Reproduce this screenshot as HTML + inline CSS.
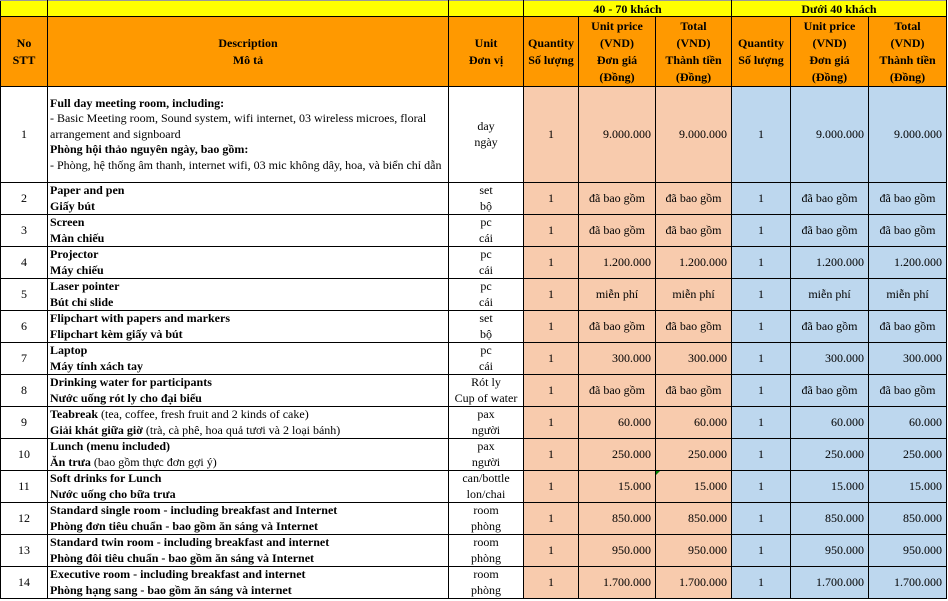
<!DOCTYPE html>
<html><head><meta charset="utf-8"><style>
body{margin:0;background:#fff;}
table{border-collapse:collapse;table-layout:fixed;font-family:"Liberation Serif","Noto Serif CJK SC",serif;font-size:12px;color:#000;position:absolute;left:0;top:0;}
td{border:1px solid #000;padding:0 2px;line-height:15.5px;overflow:hidden;white-space:nowrap;vertical-align:middle;}
tr.t td{border-top:1px solid #999;line-height:14px}
.y{background:#ffff00;font-weight:bold;text-align:center;}
.h td{background:#ff9900;font-weight:bold;text-align:center;line-height:17px}
.c{text-align:center}
.r{text-align:right;padding-right:4px}
.p{background:#f8cbad}
.b{background:#bdd7ee}
b{font-weight:bold}
tr.n{height:31px}
</style></head><body>
<table>
<colgroup><col style="width:47px"><col style="width:401px"><col style="width:75px"><col style="width:55px"><col style="width:77px"><col style="width:76px"><col style="width:59px"><col style="width:78px"><col style="width:78px"></colgroup>
<tr class="t" style="height:16px"><td class="y"></td><td class="y"></td><td class="y"></td><td class="y" colspan="3">40 - 70 khách</td><td class="y" colspan="3">Dưới 40 khách</td></tr>
<tr class="h" style="height:70px"><td>No<br>STT</td><td>Description<br>Mô tả</td><td>Unit<br>Đơn vị</td><td>Quantity<br>Số lượng</td><td>Unit price<br>(VND)<br>Đơn giá<br>(Đồng)</td><td>Total<br>(VND)<br>Thành tiền<br>(Đồng)</td><td>Quantity<br>Số lượng</td><td>Unit price<br>(VND)<br>Đơn giá<br>(Đồng)</td><td>Total<br>(VND)<br>Thành tiền<br>(Đồng)</td></tr>
<tr style="height:96px"><td class="c">1</td><td><b>Full day meeting room, including:</b><br>- Basic Meeting room, Sound system, wifi internet, 03 wireless microes, floral<br>arrangement and signboard<br><b>Phòng hội thảo nguyên ngày, bao gồm:</b><br>- Phòng, hệ thống âm thanh, internet wifi, 03 mic không dây, hoa, và biển chỉ dẫn</td><td class="c">day<br>ngày</td><td class="c p">1</td><td class="r p">9.000.000</td><td class="r p">9.000.000</td><td class="c b">1</td><td class="r b">9.000.000</td><td class="r b">9.000.000</td></tr>
<tr class="n"><td class="c">2</td><td><b>Paper and pen<br>Giấy bút</b></td><td class="c">set<br>bộ</td><td class="c p">1</td><td class="c p">đã bao gồm</td><td class="c p">đã bao gồm</td><td class="c b">1</td><td class="c b">đã bao gồm</td><td class="c b">đã bao gồm</td></tr>
<tr class="n"><td class="c">3</td><td><b>Screen<br>Màn chiếu</b></td><td class="c">pc<br>cái</td><td class="c p">1</td><td class="c p">đã bao gồm</td><td class="c p">đã bao gồm</td><td class="c b">1</td><td class="c b">đã bao gồm</td><td class="c b">đã bao gồm</td></tr>
<tr class="n"><td class="c">4</td><td><b>Projector<br>Máy chiếu</b></td><td class="c">pc<br>cái</td><td class="c p">1</td><td class="r p">1.200.000</td><td class="r p">1.200.000</td><td class="c b">1</td><td class="r b">1.200.000</td><td class="r b">1.200.000</td></tr>
<tr class="n"><td class="c">5</td><td><b>Laser pointer<br>Bút chỉ slide</b></td><td class="c">pc<br>cái</td><td class="c p">1</td><td class="c p">miễn phí</td><td class="c p">miễn phí</td><td class="c b">1</td><td class="c b">miễn phí</td><td class="c b">miễn phí</td></tr>
<tr class="n"><td class="c">6</td><td><b>Flipchart with papers and markers<br>Flipchart kèm giấy và bút</b></td><td class="c">set<br>bộ</td><td class="c p">1</td><td class="c p">đã bao gồm</td><td class="c p">đã bao gồm</td><td class="c b">1</td><td class="c b">đã bao gồm</td><td class="c b">đã bao gồm</td></tr>
<tr class="n"><td class="c">7</td><td><b>Laptop<br>Máy tính xách tay</b></td><td class="c">pc<br>cái</td><td class="c p">1</td><td class="r p">300.000</td><td class="r p">300.000</td><td class="c b">1</td><td class="r b">300.000</td><td class="r b">300.000</td></tr>
<tr class="n"><td class="c">8</td><td><b>Drinking water for participants<br>Nước uống rót ly cho đại biểu</b></td><td class="c">Rót ly<br>Cup of water</td><td class="c p">1</td><td class="c p">đã bao gồm</td><td class="c p">đã bao gồm</td><td class="c b">1</td><td class="c b">đã bao gồm</td><td class="c b">đã bao gồm</td></tr>
<tr class="n"><td class="c">9</td><td><b>Teabreak</b> (tea, coffee, fresh fruit and 2 kinds of cake)<br><b>Giải khát giữa giờ</b> (trà, cà phê, hoa quả tươi và 2 loại bánh)</td><td class="c">pax<br>người</td><td class="c p">1</td><td class="r p">60.000</td><td class="r p">60.000</td><td class="c b">1</td><td class="r b">60.000</td><td class="r b">60.000</td></tr>
<tr class="n"><td class="c">10</td><td><b>Lunch (menu included)</b><br><b>Ăn trưa</b> (bao gồm thực đơn gợi ý)</td><td class="c">pax<br>người</td><td class="c p">1</td><td class="r p">250.000</td><td class="r p">250.000</td><td class="c b">1</td><td class="r b">250.000</td><td class="r b">250.000</td></tr>
<tr class="n"><td class="c">11</td><td><b>Soft drinks for Lunch<br>Nước uống cho bữa trưa</b></td><td class="c">can/bottle<br>lon/chai</td><td class="c p">1</td><td class="r p">15.000</td><td class="r p">15.000</td><td class="c b">1</td><td class="r b">15.000</td><td class="r b">15.000</td></tr>
<tr class="n"><td class="c">12</td><td><b>Standard single room - including breakfast and Internet<br>Phòng đơn tiêu chuẩn - bao gồm ăn sáng và Internet</b></td><td class="c">room<br>phòng</td><td class="c p">1</td><td class="r p">850.000</td><td class="r p">850.000</td><td class="c b">1</td><td class="r b">850.000</td><td class="r b">850.000</td></tr>
<tr class="n"><td class="c">13</td><td><b>Standard twin room - including breakfast and internet<br>Phòng đôi tiêu chuẩn - bao gồm ăn sáng và Internet</b></td><td class="c">room<br>phòng</td><td class="c p">1</td><td class="r p">950.000</td><td class="r p">950.000</td><td class="c b">1</td><td class="r b">950.000</td><td class="r b">950.000</td></tr>
<tr class="n"><td class="c">14</td><td><b>Executive room - including breakfast and internet<br>Phòng hạng sang - bao gồm ăn sáng và internet</b></td><td class="c">room<br>phòng</td><td class="c p">1</td><td class="r p">1.700.000</td><td class="r p">1.700.000</td><td class="c b">1</td><td class="r b">1.700.000</td><td class="r b">1.700.000</td></tr>
</table>
<div style="position:absolute;left:656px;top:471px;width:0;height:0;border-top:4px solid #008000;border-right:4px solid transparent;"></div>
</body></html>
